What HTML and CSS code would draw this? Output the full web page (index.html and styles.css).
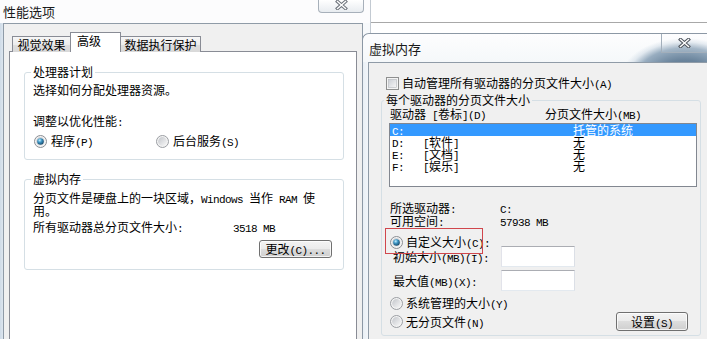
FILE: index.html
```html
<!DOCTYPE html>
<html lang="zh-CN">
<head>
<meta charset="utf-8">
<title>性能选项 / 虚拟内存</title>
<link rel="stylesheet" href="styles.css">
</head>
<body>
<svg class="defs" aria-hidden="true">
  <defs>
    <linearGradient id="rg" x1="0" y1="0" x2="1" y2="1">
      <stop offset="0" stop-color="#c3c6cb"/>
      <stop offset="1" stop-color="#f8f8f8"/>
    </linearGradient>
    <radialGradient id="rd" cx="0.38" cy="0.32" r="0.75">
      <stop offset="0" stop-color="#c4f0ff"/>
      <stop offset="0.4" stop-color="#3f97c6"/>
      <stop offset="1" stop-color="#123f5e"/>
    </radialGradient>
    <linearGradient id="cg" x1="0" y1="0" x2="1" y2="1">
      <stop offset="0" stop-color="#cbcfd5"/>
      <stop offset="1" stop-color="#f7f7f7"/>
    </linearGradient>
  </defs>
</svg>

<div class="bgwin"></div>

<section class="win perf">
  <header class="tbar">
    <span class="ttl">性能选项</span>
    <div class="cls">
      <svg class="xg" viewBox="0 0 13 10"><path d="M2.5 1.5 L10.5 8.5 M10.5 1.5 L2.5 8.5" stroke="#6d737b" stroke-width="3.4" stroke-linecap="square" fill="none"/><path d="M2.5 1.5 L10.5 8.5 M10.5 1.5 L2.5 8.5" stroke="#ffffff" stroke-width="1.4" stroke-linecap="square" fill="none"/></svg>
    </div>
  </header>
  <div class="client">
    <div class="tabs">
      <div class="tab t1">视觉效果</div>
      <div class="tab sel">高级</div>
      <div class="tab t3">数据执行保护</div>
    </div>
    <div class="page">
      <fieldset class="grp g1">
        <legend>处理器计划</legend>
        <p class="ln l1">选择如何分配处理器资源。</p>
        <p class="ln l2">调整以优化性能<span class="en">:</span></p>
        <div class="radios">
          <label class="opt o1"><svg class="rad" viewBox="0 0 13 13"><circle cx="6.5" cy="6.5" r="6" fill="#f3f3f3" stroke="#8a8d92"/><circle cx="6.5" cy="6.5" r="4.4" fill="url(#rg)"/><circle cx="6.5" cy="6.5" r="3.3" fill="url(#rd)"/></svg><span>程序<span class="en">(P)</span></span></label>
          <label class="opt"><svg class="rad" viewBox="0 0 13 13"><circle cx="6.5" cy="6.5" r="6" fill="#f3f3f3" stroke="#9a9da2"/><circle cx="6.5" cy="6.5" r="4.4" fill="url(#rg)"/></svg><span>后台服务<span class="en">(S)</span></span></label>
        </div>
      </fieldset>
      <fieldset class="grp g2">
        <legend>虚拟内存</legend>
        <p class="ln13 d1">分页文件是硬盘上的一块区域，<span class="en">Windows </span>当作<span class="en"> RAM </span>使<br>用。</p>
        <p class="ln13 tot"><span class="totl">所有驱动器总分页文件大小<span class="en">:</span></span><span class="en">3518 MB</span></p>
        <div class="btnrow"><div class="btn chg">更改<span class="en">(C)...</span></div></div>
      </fieldset>
    </div>
  </div>
</section>

<section class="win vm">
  <header class="tbar">
    <span class="ttl">虚拟内存</span>
    <div class="cls">
      <svg class="xg" viewBox="0 0 13 10"><path d="M2.5 1.5 L10.5 8.5 M10.5 1.5 L2.5 8.5" stroke="#4f555d" stroke-width="3.4" stroke-linecap="square" fill="none"/><path d="M2.5 1.5 L10.5 8.5 M10.5 1.5 L2.5 8.5" stroke="#ffffff" stroke-width="1.4" stroke-linecap="square" fill="none"/></svg>
    </div>
  </header>
  <div class="client">
    <label class="chk"><svg class="cbx" viewBox="0 0 13 13"><rect x="0.5" y="0.5" width="12" height="12" fill="#f4f4f4" stroke="#8e8f8f"/><rect x="2.5" y="2.5" width="8" height="8" fill="url(#cg)" stroke="#b4b8bd" stroke-width="0.6"/></svg><span>自动管理所有驱动器的分页文件大小<span class="en">(A)</span></span></label>
    <fieldset class="grp drv">
      <legend>每个驱动器的分页文件大小</legend>
      <p class="hdr"><span class="hc1">驱动器<span class="en"> [</span>卷标<span class="en">](D)</span></span>分页文件大小<span class="en">(MB)</span></p>
      <div class="list">
        <p class="row on"><span class="c1"><span class="en">C:</span></span><span class="c2"></span>托管的系统</p>
        <p class="row"><span class="c1"><span class="en">D:</span></span><span class="c2"><span class="en">[</span>软件<span class="en">]</span></span>无</p>
        <p class="row"><span class="c1"><span class="en">E:</span></span><span class="c2"><span class="en">[</span>文档<span class="en">]</span></span>无</p>
        <p class="row"><span class="c1"><span class="en">F:</span></span><span class="c2"><span class="en">[</span>娱乐<span class="en">]</span></span>无</p>
      </div>
      <p class="info i1"><span class="il">所选驱动器<span class="en">:</span></span><span class="en">C:</span></p>
      <p class="info"><span class="il">可用空间<span class="en">:</span></span><span class="en">57938 MB</span></p>
      <label class="opt custom"><svg class="rad" viewBox="0 0 13 13"><circle cx="6.5" cy="6.5" r="6" fill="#f3f3f3" stroke="#8a8d92"/><circle cx="6.5" cy="6.5" r="4.4" fill="url(#rg)"/><circle cx="6.5" cy="6.5" r="3.3" fill="url(#rd)"/></svg><span>自定义大小<span class="en">(C):</span></span></label>
      <div class="field f1"><span class="fl">初始大小<span class="en">(MB)(I):</span></span><div class="inp"></div></div>
      <div class="field f2"><span class="fl">最大值<span class="en">(MB)(X):</span></span><div class="inp"></div></div>
      <label class="opt sys"><svg class="rad" viewBox="0 0 13 13"><circle cx="6.5" cy="6.5" r="6" fill="#f3f3f3" stroke="#9a9da2"/><circle cx="6.5" cy="6.5" r="4.4" fill="url(#rg)"/></svg><span>系统管理的大小<span class="en">(Y)</span></span></label>
      <div class="last">
        <label class="opt"><svg class="rad" viewBox="0 0 13 13"><circle cx="6.5" cy="6.5" r="6" fill="#f3f3f3" stroke="#9a9da2"/><circle cx="6.5" cy="6.5" r="4.4" fill="url(#rg)"/></svg><span>无分页文件<span class="en">(N)</span></span></label>
        <div class="btn set">设置<span class="en">(S)</span></div>
      </div>
    </fieldset>
  </div>
</section>

<div class="redbox"></div>
</body>
</html>
```

FILE: styles.css
```css
html, body {
  margin: 0;
  padding: 0;
}
body {
  width: 707px;
  height: 339px;
  overflow: hidden;
  position: relative;
  background: #ffffff;
  font-family: "Noto Sans CJK SC", "Noto Sans", sans-serif;
  font-size: 12px;
  color: #000;
}
.defs {
  position: absolute;
  width: 0;
  height: 0;
}
.en {
  font-family: "Liberation Mono", monospace;
  font-size: 11px;
  letter-spacing: -0.6px;
  line-height: 0;
}
p {
  margin: 0;
}
label {
  display: block;
}

/* window behind */
.bgwin {
  position: absolute;
  left: 371px;
  top: 0;
  width: 336px;
  height: 22px;
  border-bottom: 1px solid #a8a8a8;
  background: #fff;
}

/* generic window */
.win {
  position: absolute;
  box-sizing: border-box;
  overflow: hidden;
}
.tbar {
  position: relative;
  display: flex;
  align-items: center;
}
.ttl {
  font-size: 13px;
  color: #1a1a1a;
}
.cls {
  position: absolute;
  box-sizing: border-box;
  width: 46px;
  display: flex;
  justify-content: center;
  align-items: center;
}
.xg {
  width: 13px;
  height: 10px;
}

/* performance options */
.perf {
  left: 0;
  top: 0;
  width: 371px;
  height: 339px;
  background: linear-gradient(90deg, #cfdbe7 0, #dde6ef 3px, #f7f9fb 3px);
  border-right: 1px solid #c3cad2;
}
.perf .tbar {
  height: 23px;
  padding-left: 3px;
  background: #fcfcfd;
}
.perf .ttl {
  line-height: 21px;
}
.perf .cls {
  left: 318px;
  top: 0;
  height: 13px;
  border: 1px solid #a7b0ba;
  border-top: none;
  border-radius: 0 0 4px 4px;
  background: linear-gradient(#ffffff, #e8ecf0);
  padding-bottom: 2px;
}
.perf .client {
  margin-left: 3px;
  width: 360px;
  height: 316px;
  box-sizing: border-box;
  border: 1px solid #8f9ba7;
  border-bottom: none;
  background: #f0f0f0;
  padding: 8px 5px 0 5px;
}
.tabs {
  position: relative;
  z-index: 1;
  display: flex;
  align-items: flex-end;
  height: 20px;
  padding-left: 3px;
}
.tab {
  box-sizing: border-box;
  height: 16px;
  border: 1px solid #898c95;
  border-bottom: none;
  background: linear-gradient(#f7f7f7, #ececec 50%, #dedede 52%, #d9d9d9);
  text-align: center;
  line-height: 15px;
  white-space: nowrap;
}
.t1 {
  width: 59px;
}
.sel {
  width: 51px;
  height: 20px;
  margin-left: -1px;
  background: #fff;
  text-align: left;
  padding: 1px 0 0 6px;
  line-height: 14px;
}
.t3 {
  width: 81px;
  margin-left: -1px;
}
.page {
  margin-top: -1px;
  width: 348px;
  height: 288px;
  box-sizing: border-box;
  border: 1px solid #898c95;
  border-bottom: none;
  background: #fff;
  overflow: hidden;
}
.grp {
  box-sizing: border-box;
  margin: 0;
  padding: 0;
  min-inline-size: 0;
  border: 1px solid #d5dfe5;
  border-radius: 3px;
}
.grp legend {
  padding: 0 2px;
  line-height: 14px;
  height: 14px;
}
.g1, .g2 {
  width: 320px;
  margin-left: 14px;
  padding-left: 8px;
}
.g1 legend, .g2 legend {
  margin-left: -2px;
}
.g1 {
  margin-top: 13px;
  padding-bottom: 11px;
}
.ln {
  line-height: 14px;
  height: 14px;
}
.l1 {
  margin-top: 4px;
}
.l2 {
  margin-top: 17px;
}
.radios {
  display: flex;
  margin-top: 6px;
  height: 14px;
  line-height: 14px;
}
.opt {
  display: flex;
  align-items: center;
  white-space: nowrap;
}
.rad {
  width: 13px;
  height: 13px;
  margin-right: 3px;
  flex: none;
}
.radios .rad {
  margin-right: 4px;
}
.o1 {
  width: 122px;
  margin-left: 1px;
}
.g2 {
  margin-top: 12px;
  padding-bottom: 11px;
}
.ln13 {
  line-height: 13px;
}
.d1 {
  margin-top: 5px;
  height: 26px;
}
.tot {
  margin-top: 3px;
  height: 13px;
  white-space: nowrap;
}
.totl {
  display: inline-block;
  width: 200px;
}
.btnrow {
  display: flex;
  justify-content: flex-end;
  margin-top: 7px;
  margin-right: 11px;
}
.btn {
  box-sizing: border-box;
  border: 1px solid #707070;
  border-radius: 3px;
  background: linear-gradient(#f3f3f3 0%, #ebebeb 48%, #dddddd 50%, #cfcfcf 100%);
  box-shadow: inset 0 0 0 1px rgba(255, 255, 255, 0.75);
  text-align: center;
  white-space: nowrap;
}
.chg {
  width: 73px;
  height: 18px;
  line-height: 16px;
}

/* virtual memory */
.vm {
  left: 362px;
  top: 33px;
  width: 345px;
  height: 306px;
  border: 1px solid #8c98a5;
  border-right: none;
  border-bottom: none;
  border-radius: 7px 0 0 0;
  background: linear-gradient(90deg, #e9eff5, #f4f7fa 6px);
}
.vm .tbar {
  height: 28px;
  padding-left: 6px;
  border-radius: 6px 0 0 0;
  background:
    radial-gradient(ellipse 64px 40px at 322px 44px, #526c86 0%, #6a849c 45%, #98adc0 75%, rgba(210, 221, 231, 0.6) 90%, rgba(255, 255, 255, 0) 100%),
    linear-gradient(#fdfdfe, #f5f8fa);
}
.vm .ttl {
  line-height: 27px;
}
.vm .cls {
  left: 298px;
  top: -1px;
  height: 20px;
  border: 1px solid #a3afbb;
  border-top: none;
  border-right: none;
  background: rgba(255, 255, 255, 0.12);
}
.vm .client {
  margin-left: 5px;
  height: 277px;
  box-sizing: border-box;
  border: 1px solid #8f9ba7;
  border-right: none;
  border-bottom: none;
  background: #f0f0f0;
}
.chk {
  display: flex;
  align-items: center;
  margin-top: 13px;
  padding-left: 17px;
  height: 14px;
  line-height: 14px;
  white-space: nowrap;
}
.cbx {
  width: 13px;
  height: 13px;
  margin-right: 3px;
  flex: none;
}
.drv {
  width: 320px;
  margin: 3px 0 0 12px;
  padding-bottom: 4px;
}
.drv legend {
  margin-left: 2px;
}
.hdr {
  margin-top: 1px;
  padding-left: 8px;
  height: 12px;
  line-height: 12px;
  white-space: nowrap;
}
.hc1 {
  display: inline-block;
  width: 155px;
}
.list {
  box-sizing: border-box;
  width: 308px;
  height: 64px;
  margin: 3px 0 0 7px;
  border: 1px solid #828790;
  background: #fff;
}
.row {
  height: 12px;
  line-height: 12px;
  padding-left: 2px;
  white-space: nowrap;
}
.row.on {
  background: #3399ff;
  color: #fff;
}
.c1 {
  display: inline-block;
  width: 31px;
}
.c2 {
  display: inline-block;
  width: 150px;
}
.info {
  padding-left: 8px;
  height: 13px;
  line-height: 13px;
  white-space: nowrap;
}
.i1 {
  margin-top: 14px;
}
.il {
  display: inline-block;
  width: 110px;
}
.custom {
  margin: 9px 0 0 8px;
  height: 12px;
  line-height: 12px;
}
.field {
  display: flex;
  align-items: center;
  padding-left: 11px;
  height: 21px;
}
.f1 {
  margin-top: -2px;
}
.f2 {
  margin-top: 3px;
}
.fl {
  width: 108px;
  white-space: nowrap;
  line-height: 13px;
}
.inp {
  box-sizing: border-box;
  width: 74px;
  height: 21px;
  border: 1px solid;
  border-color: #abadb3 #dbdfe6 #e3e9ef #e2e3ea;
  background: #fff;
}
.sys {
  margin: 5px 0 0 8px;
  height: 14px;
  line-height: 14px;
}
.last {
  display: flex;
  align-items: center;
  justify-content: space-between;
  margin: 2px 12px 0 8px;
  height: 19px;
  line-height: 14px;
}
.set {
  width: 72px;
  height: 19px;
  line-height: 17px;
}

/* annotation */
.redbox {
  position: absolute;
  left: 385px;
  top: 228px;
  width: 98px;
  height: 26px;
  box-sizing: border-box;
  border: 1px solid #d0464c;
}
```
